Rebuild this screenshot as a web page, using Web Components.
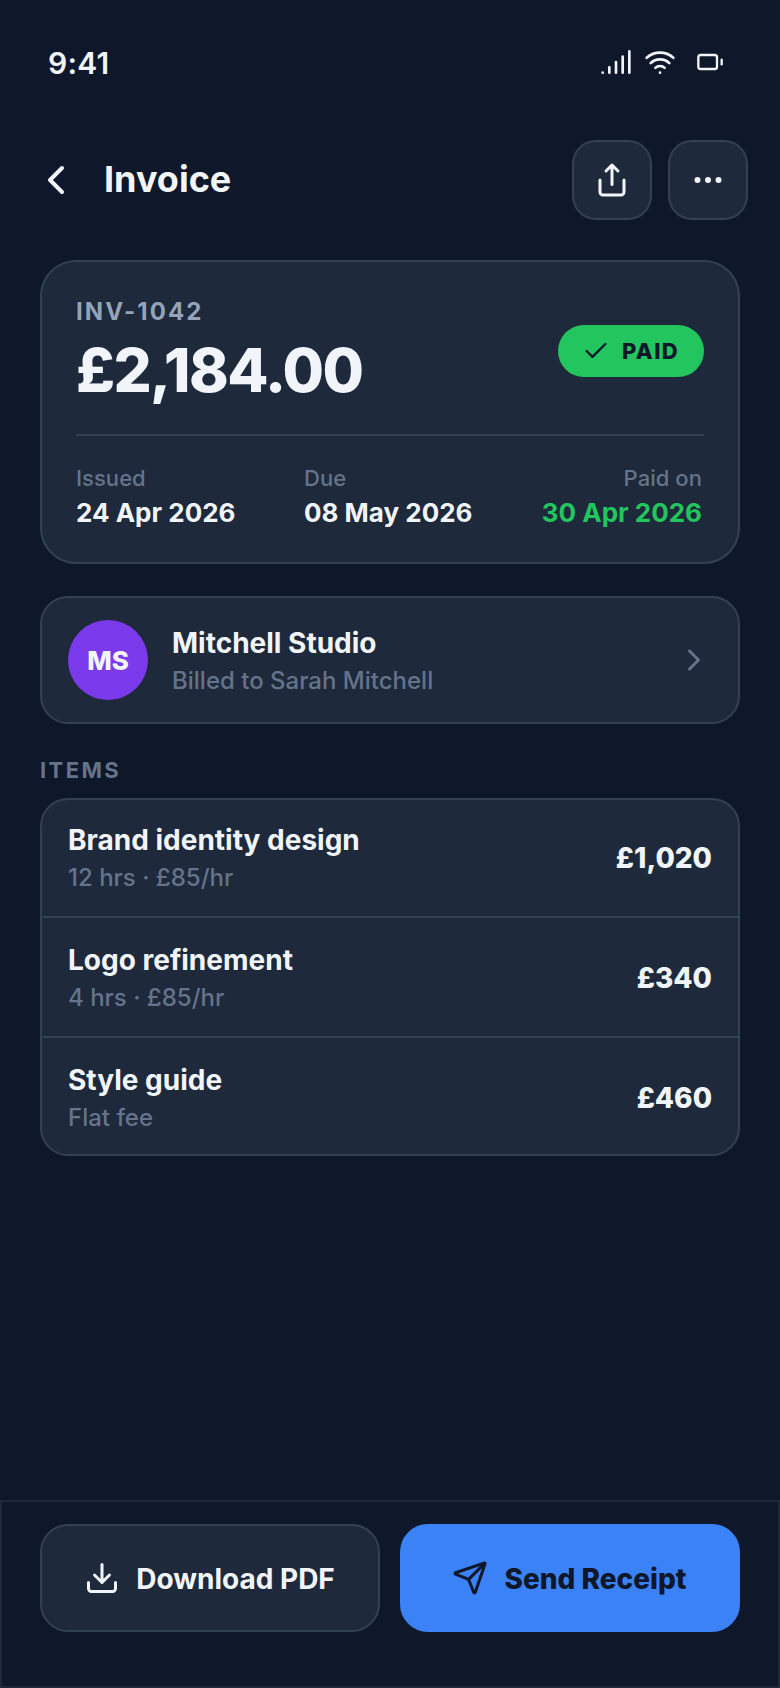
<!DOCTYPE html>
<html lang="en">
<head>
<meta charset="utf-8">
<title>Invoice</title>
<style>
  html, body { margin: 0; padding: 0; background: #0f172a; }
  body { font-family: Inter, "Liberation Sans", sans-serif; color: #f1f5f9; }
</style>
</head>
<body>
<invoice-screen></invoice-screen>
<script>
const ICONS = {
  signal: '<path d="M2 20h.01M7 20v-4M12 20v-8M17 20V8M22 4v16"/>',
  wifi: '<path d="M12 20h.01M2 8.82a15 15 0 0 1 20 0M5 12.859a10 10 0 0 1 14 0M8.5 16.429a5 5 0 0 1 7 0"/>',
  battery: '<path d="M22 14v-4"/><rect x="2" y="6" width="16" height="12" rx="2"/>',
  back: '<path d="m15 18-6-6 6-6"/>',
  forward: '<path d="m9 18 6-6-6-6"/>',
  share: '<path d="M12 2v13M16 6l-4-4-4 4M4 12v8a2 2 0 0 0 2 2h12a2 2 0 0 0 2-2v-8"/>',
  more: '<circle cx="12" cy="12" r="1"/><circle cx="19" cy="12" r="1"/><circle cx="5" cy="12" r="1"/>',
  check: '<path d="M20 6 9 17l-5-5"/>',
  download: '<path d="M12 15V3M21 15v4a2 2 0 0 1-2 2H5a2 2 0 0 1-2-2v-4M7 10l5 5 5-5"/>',
  send: '<path d="M14.536 21.686a.5.5 0 0 0 .937-.024l6.5-19a.496.496 0 0 0-.635-.635l-19 6.5a.5.5 0 0 0-.024.937l7.93 3.18a2 2 0 0 1 1.112 1.11z"/><path d="m21.854 2.147-10.94 10.939"/>'
};

function define(name, render) {
  customElements.define(name, class extends HTMLElement {
    connectedCallback() {
      if (this.shadowRoot) return;
      this.attachShadow({ mode: 'open' }).innerHTML = render(this);
    }
  });
}

define('ui-icon', el => `
  <style>
    :host { display: block; flex: none; }
    svg { display: block; }
  </style>
  <svg width="${el.getAttribute('size')}" height="${el.getAttribute('size')}" viewBox="0 0 24 24" fill="none"
    stroke="currentColor" stroke-width="2" stroke-linecap="round" stroke-linejoin="round">${ICONS[el.getAttribute('name')]}</svg>`);

define('status-bar', () => `
  <style>
    :host { display: flex; align-items: center; justify-content: space-between; height: 124px; padding: 0 48px; }
    time { margin-top: 2px; font-size: 30px; font-weight: 560; line-height: 36px; letter-spacing: .2px; }
    .icons { display: flex; align-items: center; gap: 12px; }
    .battery { width: 44px; display: flex; justify-content: center; }
  </style>
  <time><slot></slot></time>
  <div class="icons">
    <ui-icon name="signal" size="32"></ui-icon>
    <ui-icon name="wifi" size="32"></ui-icon>
    <div class="battery"><ui-icon name="battery" size="28"></ui-icon></div>
  </div>`);

define('icon-button', el => `
  <style>
    :host { display: flex; align-items: center; justify-content: center; box-sizing: border-box;
      width: 80px; height: 80px; border: 2px solid #334155; border-radius: 24px; background: #1e293b; }
  </style>
  <ui-icon name="${el.getAttribute('icon')}" size="36"></ui-icon>`);

define('nav-header', () => `
  <style>
    :host { display: flex; align-items: center; gap: 16px; padding: 16px 32px 40px; height: 80px; }
    h1 { flex: 1; margin: 0 0 2px 8px; font-size: 36px; line-height: 44px; font-weight: 700; }
  </style>
  <ui-icon name="back" size="48"></ui-icon>
  <h1><slot></slot></h1>
  <icon-button icon="share"></icon-button>
  <icon-button icon="more"></icon-button>`);

define('ui-card', () => `
  <style>
    :host { display: block; box-sizing: border-box; border: 2px solid #334155; border-radius: var(--radius, 28px);
      background: #1e293b; overflow: hidden; }
  </style>
  <slot></slot>`);

define('status-pill', () => `
  <style>
    :host { display: flex; align-items: center; gap: 12px; width: 146px; height: 52px; padding-left: 24px; box-sizing: border-box;
      border-radius: 26px; background: #22c55e; color: #0f172a; font-size: 22px; line-height: 26px; font-weight: 800; letter-spacing: 1.4px; }
  </style>
  <ui-icon name="check" size="28"></ui-icon><span><slot></slot></span>`);

define('date-field', el => `
  <style>
    :host { display: flex; flex-direction: column; gap: 6px; }
    .label { font-size: 22px; line-height: 26px; font-weight: 500; letter-spacing: .05px; color: #64748b; }
    .value { font-size: 26px; line-height: 31px; font-weight: 700; color: var(--value, #f1f5f9); }
  </style>
  <span class="label">${el.getAttribute('label')}</span>
  <span class="value"><slot></slot></span>`);

define('invoice-summary', () => `
  <style>
    :host { display: block; }
    ui-card { --radius: 36px; height: 304px; }
    .top { display: flex; align-items: flex-start; justify-content: space-between; box-sizing: border-box;
      margin: 0 34px; height: 174px; padding-top: 35px; border-bottom: 2px solid #334155; }
    status-pill { margin-top: 28px; }
    .no { font-size: 24px; line-height: 29px; font-weight: 700; letter-spacing: 2.1px; color: #94a3b8; }
    .total { margin-top: 8px; font-size: 60px; line-height: 72px; font-weight: 800; letter-spacing: -1.6px; }
    .dates { display: grid; grid-template-columns: 228px 1fr auto; margin: 29px 36px 0 34px; }
    .paid { --value: #22c55e; text-align: right; }
  </style>
  <ui-card>
    <div class="top">
      <div><div class="no">INV-1042</div><div class="total">£2,184.00</div></div>
      <status-pill>PAID</status-pill>
    </div>
    <div class="dates">
      <date-field label="Issued">24 Apr 2026</date-field>
      <date-field label="Due">08 May 2026</date-field>
      <date-field class="paid" label="Paid on">30 Apr 2026</date-field>
    </div>
  </ui-card>`);

define('client-card', () => `
  <style>
    :host { display: block; }
    .row { display: flex; align-items: center; gap: 24px; height: 124px; padding: 0 26px; }
    .avatar { display: flex; align-items: center; justify-content: center; box-sizing: border-box; width: 80px; height: 80px;
      padding-top: 1px; border-radius: 50%; background: #7c3aed; font-size: 26px; line-height: 31px; font-weight: 800; }
    .text { flex: 1; display: flex; flex-direction: column; gap: 6px; margin-top: 1px; }
    .name { font-size: 28px; line-height: 34px; font-weight: 700; }
    .sub { font-size: 24px; line-height: 29px; font-weight: 500; color: #64748b; }
    ui-icon { color: #64748b; }
  </style>
  <ui-card><div class="row">
    <div class="avatar">MS</div>
    <div class="text"><span class="name">Mitchell Studio</span><span class="sub">Billed to Sarah Mitchell</span></div>
    <ui-icon name="forward" size="36"></ui-icon>
  </div></ui-card>`);

define('line-item', el => `
  <style>
    :host { display: flex; align-items: flex-start; justify-content: space-between; box-sizing: border-box;
      height: 120px; padding: 25px 26px 0; border-bottom: 2px solid #334155; }
    :host(:first-child) { height: 118px; padding-top: 23px; }
    :host(:last-child) { height: 116px; border-bottom: 0; }
    .text { display: flex; flex-direction: column; gap: 6px; }
    .name { font-size: 28px; line-height: 34px; font-weight: 700; }
    .sub { font-size: 24px; line-height: 29px; font-weight: 500; color: #64748b; }
    .amount { margin-top: 18px; font-size: 28px; line-height: 34px; font-weight: 800; }
  </style>
  <div class="text"><span class="name"><slot></slot></span><span class="sub">${el.getAttribute('detail')}</span></div>
  <span class="amount">${el.getAttribute('amount')}</span>`);

define('action-button', el => `
  <style>
    :host { flex: 1; display: flex; align-items: center; justify-content: center; gap: 16px; box-sizing: border-box;
      height: 108px; border: 2px solid #334155; border-radius: 28px; background: #1e293b;
      font-size: 28px; line-height: 34px; font-weight: 700; }
    :host([primary]) { border-color: #3b82f6; background: #3b82f6; color: #0f172a; font-weight: 800; }
    span { margin-top: 2px; padding-right: 1px; }
  </style>
  <ui-icon name="${el.getAttribute('icon')}" size="36"></ui-icon><span><slot></slot></span>`);

define('action-bar', () => `
  <style>
    :host { display: flex; align-items: flex-start; gap: 20px; box-sizing: border-box; height: 188px;
      padding: 22px 38px 0; border: 2px solid #1e293b; background: #0f172a; }
  </style>
  <slot></slot>`);

define('invoice-screen', () => `
  <style>
    :host { display: flex; flex-direction: column; width: 780px; height: 1688px; background: #0f172a; overflow: hidden; }
    main { flex: 1; padding: 0 40px; }
    client-card { margin-top: 32px; }
    h2 { margin: 33px 0 15px; font-size: 22px; line-height: 26px; font-weight: 700; letter-spacing: 2.4px; color: #64748b; }
  </style>
  <status-bar>9:41</status-bar>
  <nav-header>Invoice</nav-header>
  <main>
    <invoice-summary></invoice-summary>
    <client-card></client-card>
    <h2>ITEMS</h2>
    <ui-card>
      <line-item detail="12 hrs · £85/hr" amount="£1,020">Brand identity design</line-item>
      <line-item detail="4 hrs · £85/hr" amount="£340">Logo refinement</line-item>
      <line-item detail="Flat fee" amount="£460">Style guide</line-item>
    </ui-card>
  </main>
  <action-bar>
    <action-button icon="download">Download PDF</action-button>
    <action-button icon="send" primary>Send Receipt</action-button>
  </action-bar>`);
</script>
</body>
</html>
